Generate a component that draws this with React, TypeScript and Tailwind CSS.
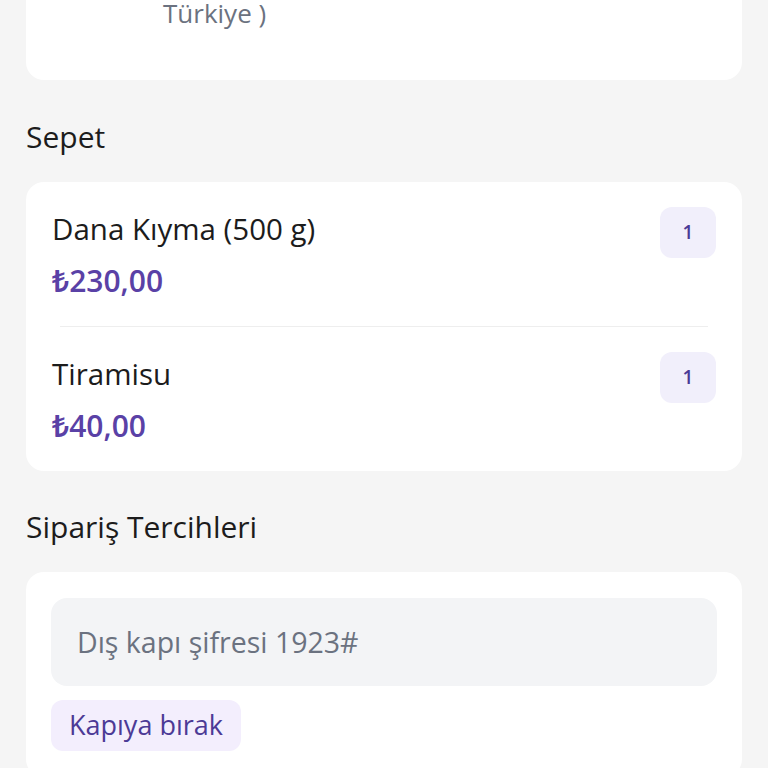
import React from "react";

type CartItem = { name: string; price: string; qty: number };

const items: CartItem[] = [
  { name: "Dana Kıyma (500 g)", price: "₺230,00", qty: 1 },
  { name: "Tiramisu", price: "₺40,00", qty: 1 },
];

const SectionTitle = ({ children, top }: { children: React.ReactNode; top: string }) => (
  <div className={`${top} mb-[27px] px-[26px] text-[30px] leading-[36px] font-medium text-[#1c1c1c]`}>
    {children}
  </div>
);

const ItemRow = ({ item }: { item: CartItem }) => (
  <div className="flex items-start justify-between pt-[25px] pb-[23px]">
    <div className="flex flex-col">
      <div className="text-[29.5px] leading-[44px] text-[#1c1c1c]">{item.name}</div>
      <div className="mt-[8px] text-[30px] leading-[44px] font-semibold text-[#5a41a6]">{item.price}</div>
    </div>
    <div className="flex h-[51px] w-[56px] items-center justify-center rounded-[12px] bg-[#f1effb] text-[19px] font-semibold text-[#4c3a96]">
      {item.qty}
    </div>
  </div>
);

export default function App() {
  return (
    <div
      className="min-h-[768px] w-full overflow-hidden bg-[#f5f5f5] pb-10"
      style={{ fontFamily: '"Open Sans", "Noto Sans", sans-serif' }}
    >
      <div className="mx-[26px] rounded-b-[18px] bg-white pb-[54px] pl-[137px]">
        <div className="text-[26px] leading-[26px] text-[#6b7280]">Türkiye )</div>
      </div>

      <SectionTitle top="mt-[39px]">Sepet</SectionTitle>

      <div className="mx-[26px] rounded-[18px] bg-white px-[26px]">
        {items.map((item, i) => (
          <div key={item.name}>
            {i > 0 && <div className="mx-[8px] h-px bg-[#eeeeee]" />}
            <ItemRow item={item} />
          </div>
        ))}
      </div>

      <SectionTitle top="mt-[38px]">Sipariş Tercihleri</SectionTitle>

      <div className="mx-[26px] rounded-[18px] bg-white px-[25px] pt-[26px] pb-[26px]">
        <div className="flex h-[88px] items-center rounded-[16px] bg-[#f3f4f6] px-[26px] text-[28.5px] text-[#6b7280]">
          Dış kapı şifresi 1923#
        </div>
        <div className="mt-[14px] flex">
          <div className="flex h-[51px] items-center rounded-[12px] bg-[#f3eefd] px-[18px] text-[27px] font-medium text-[#4c3a96]">
            Kapıya bırak
          </div>
        </div>
      </div>
    </div>
  );
}
